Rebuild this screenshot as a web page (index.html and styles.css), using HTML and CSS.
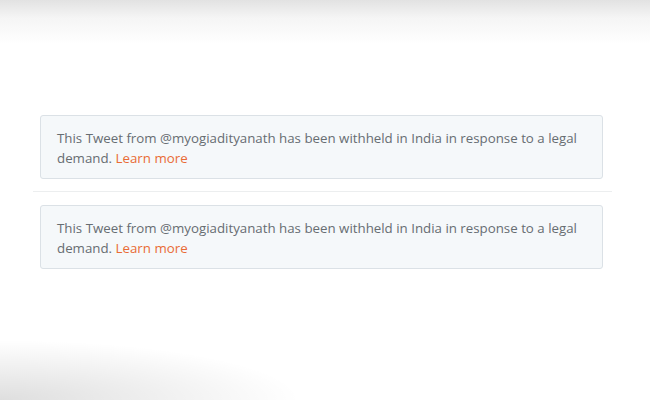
FILE: index.html
```html
<!DOCTYPE html>
<html lang="en">
<head>
    <meta charset="UTF-8">
    <title>Withheld Tweets</title>
    <link rel="stylesheet" href="styles.css">
</head>
<body>
    <main class="timeline">
        <div class="tweet-slot">
            <p class="withheld">This Tweet from @myogiadityanath has been withheld in India in response to a legal demand. <a href="#">Learn more</a></p>
        </div>
        <div class="tweet-slot">
            <p class="withheld">This Tweet from @myogiadityanath has been withheld in India in response to a legal demand. <a href="#">Learn more</a></p>
        </div>
    </main>
</body>
</html>
```

FILE: styles.css
```css
html, body {
    height: 100%;
    margin: 0;
    overflow: hidden;
}

body {
    font-family: "Open Sans", "Noto Sans", Arial, sans-serif;
    color: #676d72;
    background:
        radial-gradient(ellipse 300px 60px at 0% 100%, rgba(0,0,0,0.13), rgba(0,0,0,0) 100%),
        linear-gradient(to bottom, #e2e2e2 0px, #f5f5f5 18px, #ffffff 44px);
}

.timeline {
    padding: 115px 38px 0 33px;
}

.tweet-slot {
    padding: 0 9px 12px 7px;
    border-bottom: 1px solid #eceeef;
    margin-bottom: 13px;
}

.tweet-slot:last-child {
    border-bottom: none;
}

.withheld {
    margin: 0;
    background: #f5f8fa;
    border: 1px solid #dbe1e6;
    border-radius: 3px;
    padding: 12px 16px 10px;
    font-size: 13.3px;
    line-height: 20px;
}

.withheld a {
    color: #e96b35;
    text-decoration: none;
}
```
